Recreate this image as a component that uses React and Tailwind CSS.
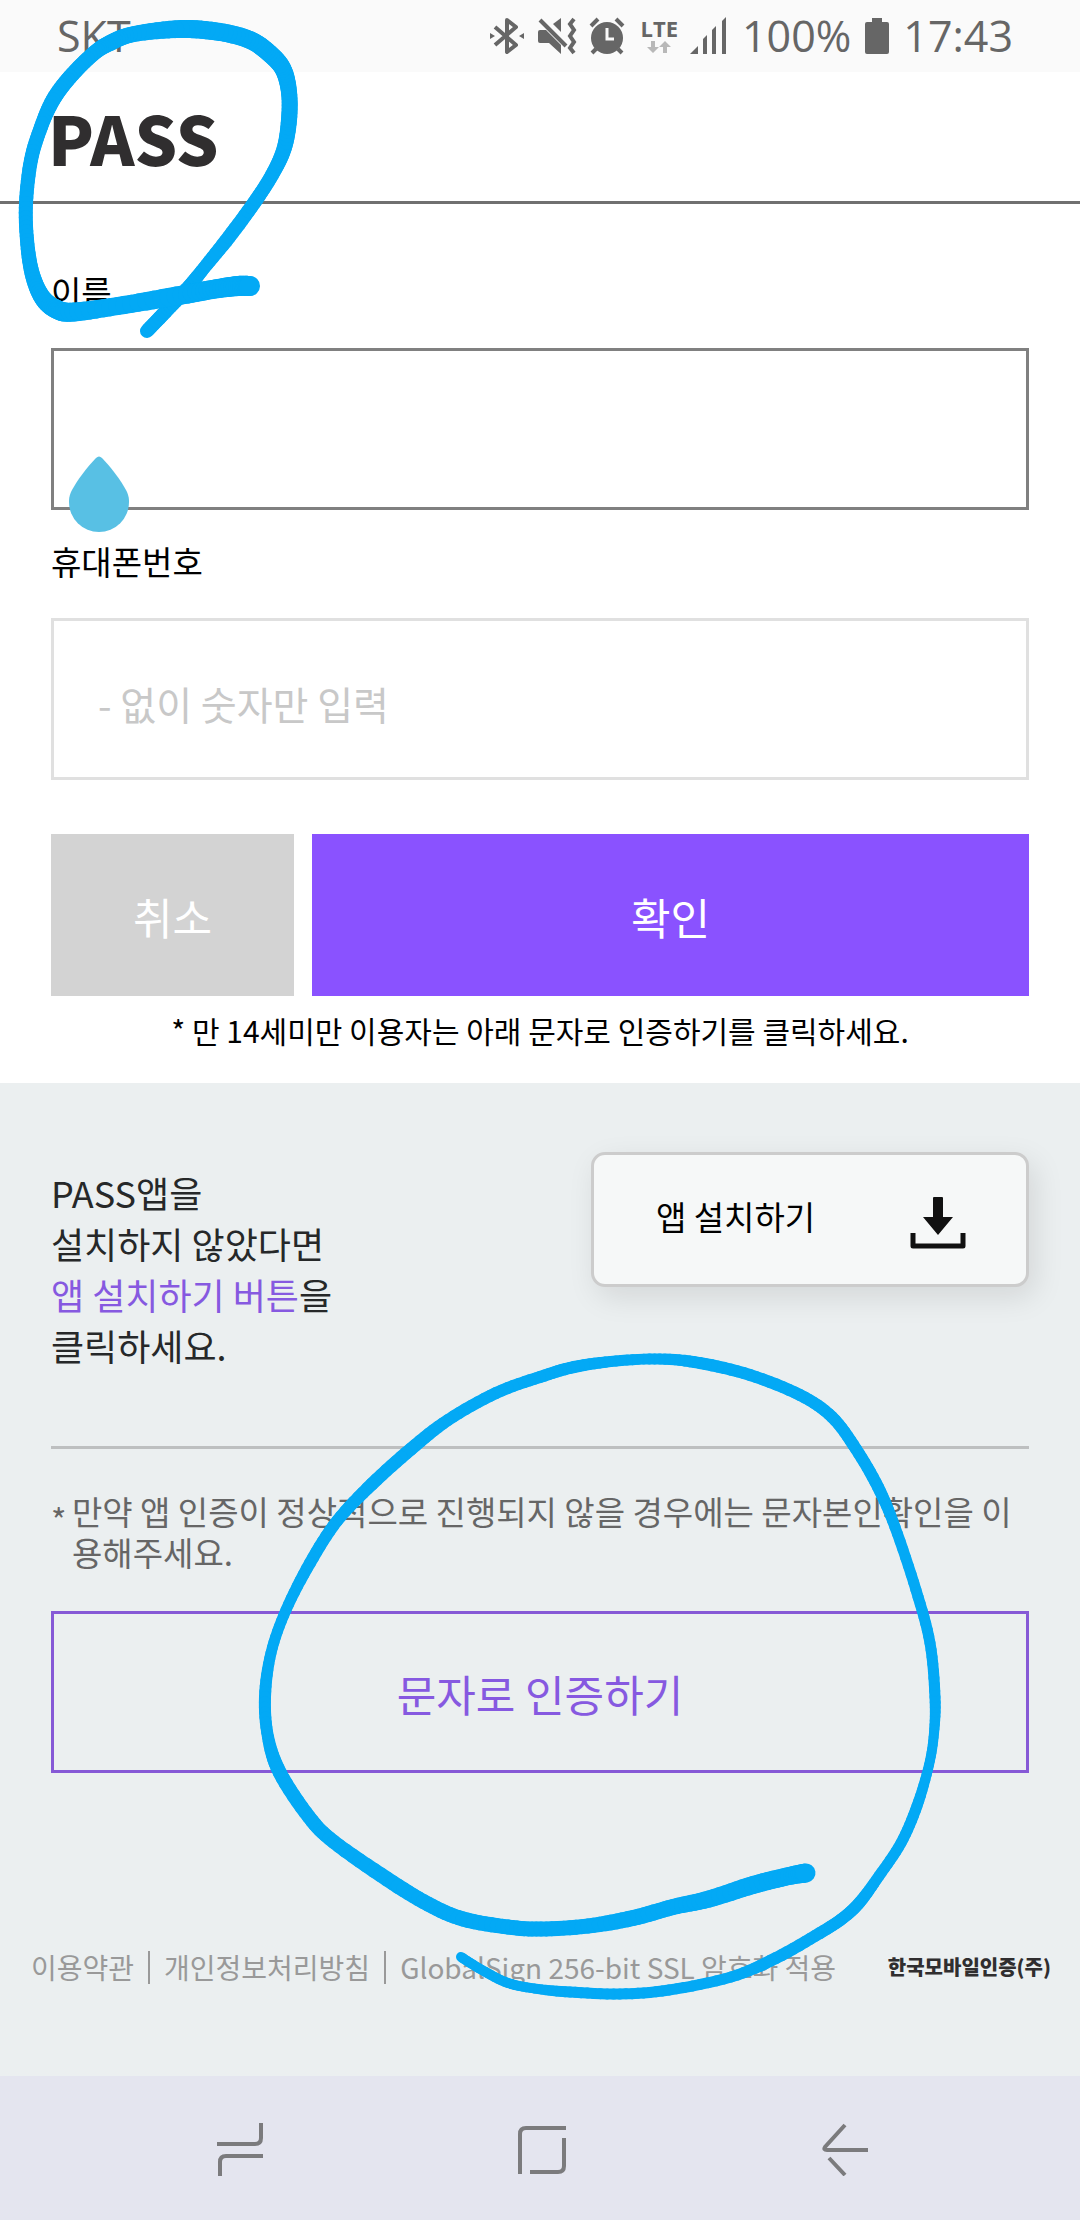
import { useState } from 'react'

const BluetoothIcon = () => (
  <svg className="w-9 h-10 shrink-0" viewBox="0 0 36 40" fill="none" stroke="#666" strokeWidth="4" strokeLinejoin="round">
    <path d="M6 11 L27 29 L18 36 V4 L27 11 L6 29" />
    <path d="M1 17 L6 20 L1 23 Z M35 17 L30 20 L35 23 Z" fill="#666" stroke="none" />
  </svg>
)

const MuteIcon = () => (
  <svg className="w-10 h-10 shrink-0" viewBox="0 0 40 40" fill="#666">
    <path d="M1 16 Q1 14 3 14 H9 L24 29 V38 L12 27 H3 Q1 27 1 25 Z" />
    <path d="M24 2 V16 L16 8 Z" />
    <path d="M3 4 L29 30" stroke="#666" strokeWidth="4" />
    <path d="M37 3 L33 8 L37 14 L33 20 L37 26 L33 32 L37 37" fill="none" stroke="#666" strokeWidth="4" />
  </svg>
)

const AlarmIcon = () => (
  <svg className="w-9 h-10 shrink-0" viewBox="0 0 36 40" fill="none" stroke="#666" strokeWidth="4">
    <circle cx="18" cy="22" r="16" fill="#666" stroke="none" />
    <path d="M2 10 L9 3 M34 10 L27 3 M7 33 L3 37 M29 33 L33 37" />
    <path d="M18 12 V23 H25" stroke="#fafafa" strokeWidth="3" />
  </svg>
)

const SignalIcon = () => (
  <svg className="w-9 h-10 shrink-0" viewBox="0 0 36 40" fill="#666">
    <path d="M0 38 L8 30 V38 Z M13 23 L17 19 V38 H13 Z M22 14 L26 10 V38 H22 Z M32 5 L36 1 V38 H32 Z" />
  </svg>
)

const BatteryIcon = () => (
  <svg className="w-6 h-10 shrink-0" viewBox="0 0 24 40" fill="#666">
    <path d="M7 2 H17 V6 H22 Q24 6 24 8 V36 Q24 38 22 38 H2 Q0 38 0 36 V8 Q0 6 2 6 H7 Z" />
  </svg>
)

const StatusBar = () => (
  <div className="flex h-[72px] items-center justify-between bg-[#fafafa] pl-[57px] pr-[67px] font-['Open_Sans',sans-serif] text-[43px] leading-[72px] text-[#666]">
    <span>SKT</span>
    <div className="flex items-center">
      <div className="flex items-center gap-3">
        <BluetoothIcon />
        <MuteIcon />
        <AlarmIcon />
        <div className="ml-1 flex flex-col items-center gap-1">
          <span className="text-[22px] font-bold leading-[18px]">LTE</span>
          <svg className="h-3 w-6" viewBox="0 0 24 12" fill="#b8b8b8">
            <path d="M4 0 H8 V6 H12 L6 12 L0 6 H4 Z M16 12 H20 V6 H24 L18 0 L12 6 H16 Z" />
          </svg>
        </div>
        <SignalIcon />
      </div>
      <span className="ml-4 mr-3.5">100%</span>
      <BatteryIcon />
      <span className="ml-3.5">17:43</span>
    </div>
  </div>
)

const NavBar = () => (
  <nav className="flex h-36 items-center justify-around bg-[#e4e5ef] pl-[89px] pr-[84px]">
    <button aria-label="Recents">
      <svg className="h-14 w-12" viewBox="0 0 48 56" fill="none" stroke="#7b7b7d" strokeWidth="4">
        <path d="M1 24 H39 Q45 24 45 18 V3 M47 36 H10 Q4 36 4 42 V56" />
      </svg>
    </button>
    <button aria-label="Home">
      <svg className="h-14 w-12" viewBox="0 0 48 56" fill="none" stroke="#7b7b7d" strokeWidth="4">
        <path d="M2 54 V14 Q2 8 8 8 H48 M46 18 V46 Q46 52 40 52 H12" />
      </svg>
    </button>
    <button aria-label="Back">
      <svg className="h-14 w-12" viewBox="0 0 48 56" fill="none" stroke="#7b7b7d" strokeWidth="4">
        <path d="M24 5 L4 27 Q2 30 6 30 H47 M8 38 L24 55" />
      </svg>
    </button>
  </nav>
)

// each point is [x, y, pen width]
const smallLoop = [
  [147, 331, 14], [168, 309, 14], [187, 289, 14], [204, 268, 13], [229, 237, 14], [254, 203, 14], [272, 175, 14],
  [284, 149, 15], [289, 120, 16], [289, 92, 16], [283, 69, 17], [269, 53, 18], [250, 40, 18], [220, 32, 18], [181, 29, 18],
  [134, 34, 16], [110, 43, 16], [93, 54, 15], [70, 77, 15], [53, 100, 15], [41, 127, 14], [31, 160, 14],
  [26, 203, 14], [27, 240, 14], [32, 273, 15], [42, 297, 17], [56, 309, 19], [74, 312, 19], [124, 305, 18],
  [182, 295, 19], [215, 289, 19], [238, 286, 20], [250, 286, 20]
]

const bigLoop = [
  [461, 1957, 10], [482, 1970, 10], [508, 1983, 10], [538, 1989, 10], [570, 1992, 11], [620, 1994, 11], [669, 1990, 11], [731, 1977, 11],
  [776, 1958, 12], [820, 1933, 12], [843, 1918, 12], [860, 1902, 12], [879, 1876, 11], [901, 1843, 11], [917, 1806, 11],
  [929, 1765, 10], [934, 1733, 10], [935, 1697, 11], [930, 1643, 11], [916, 1590, 11], [895, 1527, 11],
  [878, 1487, 12], [856, 1449, 12], [832, 1417, 12], [800, 1395, 12], [750, 1375, 12], [700, 1363, 12],
  [660, 1359, 11], [616, 1361, 11], [574, 1367, 12], [540, 1377, 12], [496, 1393, 12], [448, 1420, 12],
  [411, 1449, 13], [372, 1484, 13], [337, 1521, 12], [310, 1563, 12], [286, 1610, 11], [271, 1653, 11],
  [265, 1697, 12], [268, 1737, 12], [280, 1773, 14], [309, 1817, 14], [334, 1842, 14], [387, 1879, 15],
  [428, 1904, 15], [463, 1919, 15], [508, 1927, 15], [541, 1929, 15], [588, 1926, 15], [633, 1918, 16],
  [673, 1907, 16], [709, 1899, 17], [753, 1885, 18], [789, 1876, 18], [806, 1873, 19]
]

const catmull = (a, b, c, d, t) =>
  0.5 * (2 * b + (c - a) * t + (2 * a - 5 * b + 4 * c - d) * t * t + (3 * b - a - 3 * c + d) * t * t * t)

const samplePen = (points, steps = 8) => {
  const out = []
  for (let i = 0; i < points.length - 1; i++) {
    const p0 = points[Math.max(i - 1, 0)]
    const p1 = points[i]
    const p2 = points[i + 1]
    const p3 = points[Math.min(i + 2, points.length - 1)]
    for (let s = 0; s < steps; s++) {
      out.push([0, 1, 2].map((k) => catmull(p0[k], p1[k], p2[k], p3[k], s / steps)))
    }
  }
  out.push(points[points.length - 1])
  return out
}

const PenStroke = ({ points }) => {
  const samples = samplePen(points)
  return (
    <g stroke="#03a9f5" strokeLinecap="round">
      {samples.slice(1).map(([x, y, w], i) => (
        <line key={i} x1={samples[i][0]} y1={samples[i][1]} x2={x} y2={y} strokeWidth={w} />
      ))}
    </g>
  )
}

const App = () => {
  const [name, setName] = useState('')
  const [phone, setPhone] = useState('')

  return (
    <div className="relative overflow-hidden bg-white font-['Noto_Sans_CJK_KR',sans-serif] text-black">
      <StatusBar />

      <header className="flex h-[132px] items-center border-b-[3px] border-[#707070] px-[48px]">
        <h1 className="text-[67px] font-black leading-none text-[#302e2f]">PASS</h1>
      </header>

      <form className="px-[51px] pt-9" onSubmit={(e) => e.preventDefault()}>
        <label htmlFor="name" className="block pb-1.5 text-[33px] leading-[102px]">이름</label>
        <div className="relative">
          <input
            id="name"
            type="text"
            value={name}
            onChange={(e) => setName(e.target.value)}
            className="block h-[162px] w-full border-[3px] border-[#808080] px-11 pt-2 text-[39px] outline-none"
          />
          {/* Cursor handle */}
          <svg className="absolute left-[17px] top-[108px] h-[76px] w-[62px]" viewBox="0 0 62 76" fill="#58c0e4">
            <path d="M28 2 Q31 -1 34 2 C44 12 53 25 58 34 C61 40 61 43 61 46 A30 30 0 0 1 1 46 C1 43 1 40 4 34 C9 25 18 12 28 2 Z" />
          </svg>
        </div>

        <label htmlFor="phone" className="block pb-1.5 text-[33px] leading-[102px]">휴대폰번호</label>
        <input
          id="phone"
          type="tel"
          value={phone}
          onChange={(e) => setPhone(e.target.value)}
          placeholder="- 없이 숫자만 입력"
          className="block h-[162px] w-full border-[3px] border-[#e0e0e0] px-11 pt-2 text-[39px] outline-none placeholder:text-[#c8c8c8]"
        />

        <div className="mt-[54px] flex gap-[18px] text-[43px] text-white">
          <button type="button" className="h-[162px] w-[243px] bg-[#d3d3d3] pt-0.5">취소</button>
          <button type="submit" className="h-[162px] flex-1 bg-[#8a52ff] pt-0.5">확인</button>
        </div>
        <p className="pb-[18px] text-center text-[30px] leading-[69px]">
          * 만 14세미만 이용자는 아래 문자로 인증하기를 클릭하세요.
        </p>
      </form>

      <section className="bg-[#ebeff0] px-[51px] pb-[169px] pt-[69px]">
        <div className="flex items-start justify-between">
          <p className="pt-[15px] text-[36px] leading-[51px] text-[#262829]">
            PASS앱을<br />
            설치하지 않았다면<br />
            <span className="text-[#8659e0]">앱 설치하기 버튼</span>을<br />
            클릭하세요.
          </p>
          <button className="flex h-[135px] w-[438px] items-center justify-between rounded-[14px] border-[3px] border-[#ccc] bg-[#f6f8f8] pl-[62px] pr-[60px] text-[33px] shadow-[6px_10px_30px_rgba(0,0,0,0.1)]">
            <span className="pb-1.5">앱 설치하기</span>
            <svg className="mt-1.5 h-[52px] w-14" viewBox="0 0 56 52" fill="#111">
              <path d="M24 0 H32 Q33 0 33 1 V20 H43 L28 38 L13 20 H23 V1 Q23 0 24 0 Z" />
              <path d="M3 36 V49 H53 V36" fill="none" stroke="#111" strokeWidth="5" strokeLinejoin="round" />
            </svg>
          </button>
        </div>

        <hr className="mt-[75px] border-t-[3px] border-[#bdbfc0]" />

        <div className="mt-[42px] flex text-[33px] leading-[41px] text-[#666]">
          <span className="w-[21px] shrink-0 pt-2">*</span>
          <p>만약 앱 인증이 정상적으로 진행되지 않을 경우에는 문자본인확인을 이용해주세요.</p>
        </div>
        <button className="mt-[38px] block h-[162px] w-full border-[3px] border-[#8659d6] pt-0.5 text-[43px] text-[#8659e0]">
          문자로 인증하기
        </button>
      </section>

      <footer className="flex items-center justify-between bg-[#ebeff0] pb-[84px] pl-[31px] pr-[29px] text-[28px] leading-[50px] text-[#999]">
        <div className="flex items-center gap-3.5">
          <a href="#terms">이용약관</a>
          <span className="h-[33px] w-0.5 bg-[#999]" />
          <a href="#privacy">개인정보처리방침</a>
          <span className="h-[33px] w-0.5 bg-[#999]" />
          <span>GlobalSign 256-bit SSL 암호화 적용</span>
        </div>
        <span className="text-[20px] font-black leading-[44px] text-[#302e2f]">한국모바일인증(주)</span>
      </footer>

      <NavBar />

      {/* Pen marks over the page */}
      <svg className="pointer-events-none absolute left-0 top-0 h-full w-full" viewBox="0 0 1080 2220" preserveAspectRatio="none">
        <PenStroke points={smallLoop} />
        <PenStroke points={bigLoop} />
      </svg>
    </div>
  )
}

export default App
